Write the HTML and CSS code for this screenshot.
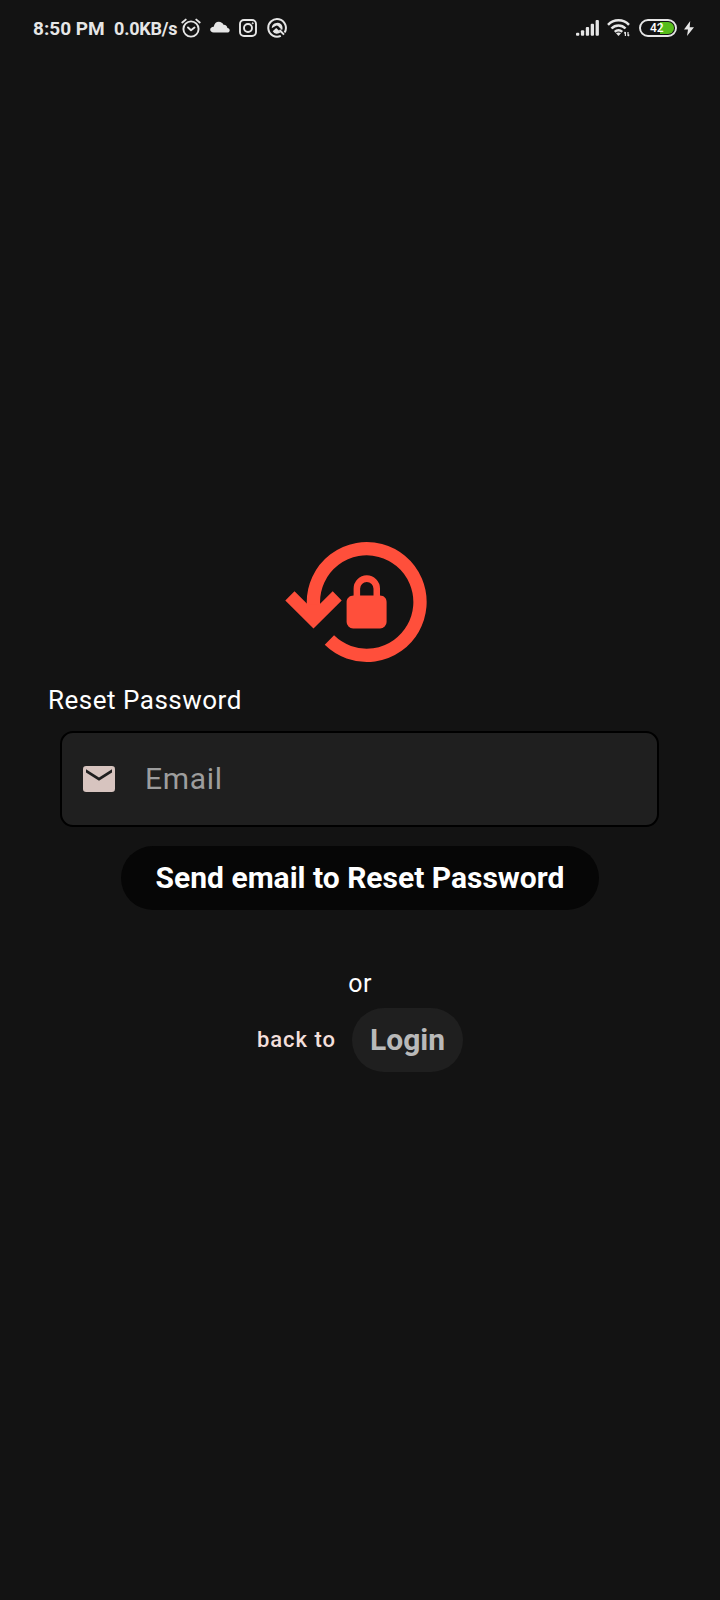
FILE: index.html
```html
<!DOCTYPE html>
<html lang="en">
<head>
<meta charset="utf-8">
<title>Reset Password</title>
<link rel="stylesheet" href="styles.css">
</head>
<body>
<header class="status">
  <span class="time">8:50 PM</span>
  <span class="speed">0.0KB/s</span>
  <svg class="alarm" width="20" height="20" viewBox="0 0 20 20" fill="none" stroke="#e6e6e6" stroke-width="1.9" stroke-linecap="round" stroke-linejoin="round"><circle cx="10" cy="11" r="7.600"/><path d="M1.300 4.500 4.700 1.600M18.700 4.500 15.300 1.600M7 9.500l3 2.800 3.500-2.800"/></svg>
  <svg class="cloud" width="20" height="12" viewBox="0 0 20 12" fill="#e6e6e6"><path d="M3.700 11.500C1.400 11.500.2 10.200.2 8.600c0-1.500 1.300-2.800 3.500-2.900C4.200 2.600 6.200.7 8.700.7c2.400 0 4.100 1.300 4.800 3.100 2.200-.2 3.700 1.200 3.900 3.100 1.400.2 2.300 1.100 2.300 2.300 0 1.400-1 2.300-2.700 2.300z"/></svg>
  <svg class="insta" width="18" height="18" viewBox="0 0 18 18" fill="none" stroke="#e6e6e6" stroke-width="1.900"><rect x="1" y="1" width="16" height="16" rx="4"/><circle cx="9" cy="9" r="4"/><circle cx="13.700" cy="4.300" r=".6" fill="#e6e6e6" stroke-width=".8"/></svg>
  <svg class="app" width="20" height="20" viewBox="0 0 20 20" fill="none" stroke="#e6e6e6"><path stroke-width="2" d="M13.800 17.900A8.800 8.800 0 1 1 17.600 14.500"/><path fill="#e6e6e6" stroke="none" d="M4.700 10.300a5.500 5.500 0 0 1 10.700-1.700q.5 2-.3 3.700l-4-4.300q-1.300-1.100-2.600 0z"/><path fill="#e6e6e6" stroke="none" d="M5.700 13.200 9.200 10l4.500 4.300q-2 1.600-4.300 1.400-2.500-.2-3.700-2.500z"/><path stroke-width="1.900" d="m12.500 12 4.500 4.700"/></svg>
  <span class="spacer"></span>
  <svg class="signal" width="23" height="16" viewBox="0 0 23 16" fill="#e6e6e6"><rect y="12.700" width="3.300" height="3.100" rx="1"/><rect x="4.900" y="10.200" width="3.300" height="5.600" rx="1"/><rect x="9.800" y="7" width="3.300" height="8.800" rx="1"/><rect x="14.700" y="3.700" width="3.300" height="12.100" rx="1"/><rect x="19.600" y="0" width="3.300" height="15.800" rx="1"/></svg>
  <svg class="wifi" width="23" height="18" viewBox="0 0 23 18" fill="none" stroke="#e6e6e6" stroke-width="2.500"><path d="M1 5.800a14.500 14.500 0 0 1 21 0M4.500 9.500a9.600 9.600 0 0 1 14 0M7.800 12.800a5.200 5.200 0 0 1 7.400 0"/><path fill="#e6e6e6" stroke="none" d="m9 14.300 2.500 2.700 2.500-2.700q-2.500-1.800-5 0z"/><path stroke-width="1.200" d="M18.400 13v4m-1.200-2.700 1.200-1.300M21 13v4m1.200-1.300L21 17"/></svg>
  <span class="battery"><svg width="38" height="18" viewBox="0 0 38 18"><path fill="#56bd1b" d="M21 3h8a6 6 0 0 1 0 12h-8z"/><rect x="1" y="1" width="36" height="16" rx="8" fill="none" stroke="#e6e6e6" stroke-width="1.900"/></svg><b class="level">42</b></span>
  <svg class="bolt" width="10" height="15" viewBox="0 0 10 15" fill="#e6e6e6"><path d="M6.200 0 0 8.400h4L3 15l7-8.700H5.700z"/></svg>
</header>
<main class="page">
  <svg class="logo" width="142" height="121" viewBox="285 541 142 121" fill="#ff4f3b">
    <path fill="none" stroke="#ff4f3b" stroke-width="13.300" d="M313.400 608V602a53.300 53.300 0 1 1 16 38.100"/>
    <path d="m285.300 600.500 9.200-9.200 13.300 13.300h11.600l13.300-13.300 9 9.200-28.200 28z"/>
    <path fill-rule="evenodd" d="M353.600 595.500v-7a13.200 13.200 0 0 1 26.400 0v7c4 0 6.600 2.800 6.600 6.700v19.800a6.500 6.500 0 0 1-6.500 6.500h-27a6.500 6.500 0 0 1-6.500-6.500v-19.800c0-3.900 3-6.700 7-6.700zm6.500 0h13.400v-6.800a6.700 6.700 0 0 0-13.400 0z"/>
  </svg>
  <h1 class="title">Reset Password</h1>
  <div class="field">
    <svg width="32" height="26" viewBox="0 0 32 26"><rect width="32" height="26" rx="3.200" fill="#d7c4bf"/><path fill="#1f1f1f" d="M3 3.200 16 11.500 29 3.200v3.200L16 14.700 3 6.400z"/></svg>
    <span class="placeholder">Email</span>
  </div>
  <button class="send">Send email to Reset Password</button>
  <p class="or">or</p>
  <div class="back"><span class="back-text">back to</span><button class="login">Login</button></div>
</main>
</body>
</html>
```
FILE: styles.css
```css
* { box-sizing: border-box; }
body { margin: 0; height: 1600px; background: #131313; color: #fff; font-family: Roboto, sans-serif; }
.status { display: flex; align-items: center; height: 56px; padding: 0 26px 0 33px; color: #e6e6e6; font-weight: 700; white-space: nowrap; }
.time { font-size: 19px; width: 81px; line-height: 22px; margin-top: 1px; }
.speed { font-size: 18px; width: 67px; line-height: 22px; margin-top: 1px; letter-spacing: -.2px; }
.status svg { flex: none; display: block; }
.cloud { margin-left: 9px; margin-bottom: 2px; }
.insta { margin-left: 9px; margin-bottom: 1px; }
.app { margin-left: 10px; margin-bottom: 1px; }
.spacer { flex: 1; }
.wifi { margin-left: 8px; }
.battery { position: relative; margin-left: 9px; }
.level { position: absolute; left: 11px; top: 2px; font-size: 12px; line-height: 14px; font-weight: 500; color: #fff; }
.bolt { margin-left: 7px; }
.page { display: flex; flex-direction: column; align-items: center; padding-top: 485px; }
.logo { display: block; margin-right: 8px; }
.title { align-self: flex-start; margin: 20px 0 0 48px; font-size: 26px; line-height: 36px; font-weight: 400; letter-spacing: .5px; }
.field { display: flex; align-items: center; gap: 30px; width: 599px; height: 96px; margin: 13px 1px 0 0; padding-left: 21px; border: 2px solid #000; border-radius: 13px; background: #1f1f1f; }
.placeholder { font-size: 30px; line-height: 36px; letter-spacing: .7px; color: #9d9d9d; }
button { border: 0; padding: 0 0 2px; font-family: inherit; font-weight: 700; }
.send { width: 478px; height: 64px; margin-top: 19px; border-radius: 32px; background: #060606; color: #fff; font-size: 30px; }
.or { margin: 57px 0 0; font-size: 25px; line-height: 34px; letter-spacing: .5px; }
.back { display: flex; align-items: center; gap: 16px; margin-top: 7px; }
.back-text { padding-bottom: 2px; font-size: 22px; font-weight: 500; letter-spacing: 1px; color: #f3dfdb; }
.login { width: 111px; height: 64px; border-radius: 32px; background: #1f1f1f; color: #b9b9b9; font-size: 30px; }
```
